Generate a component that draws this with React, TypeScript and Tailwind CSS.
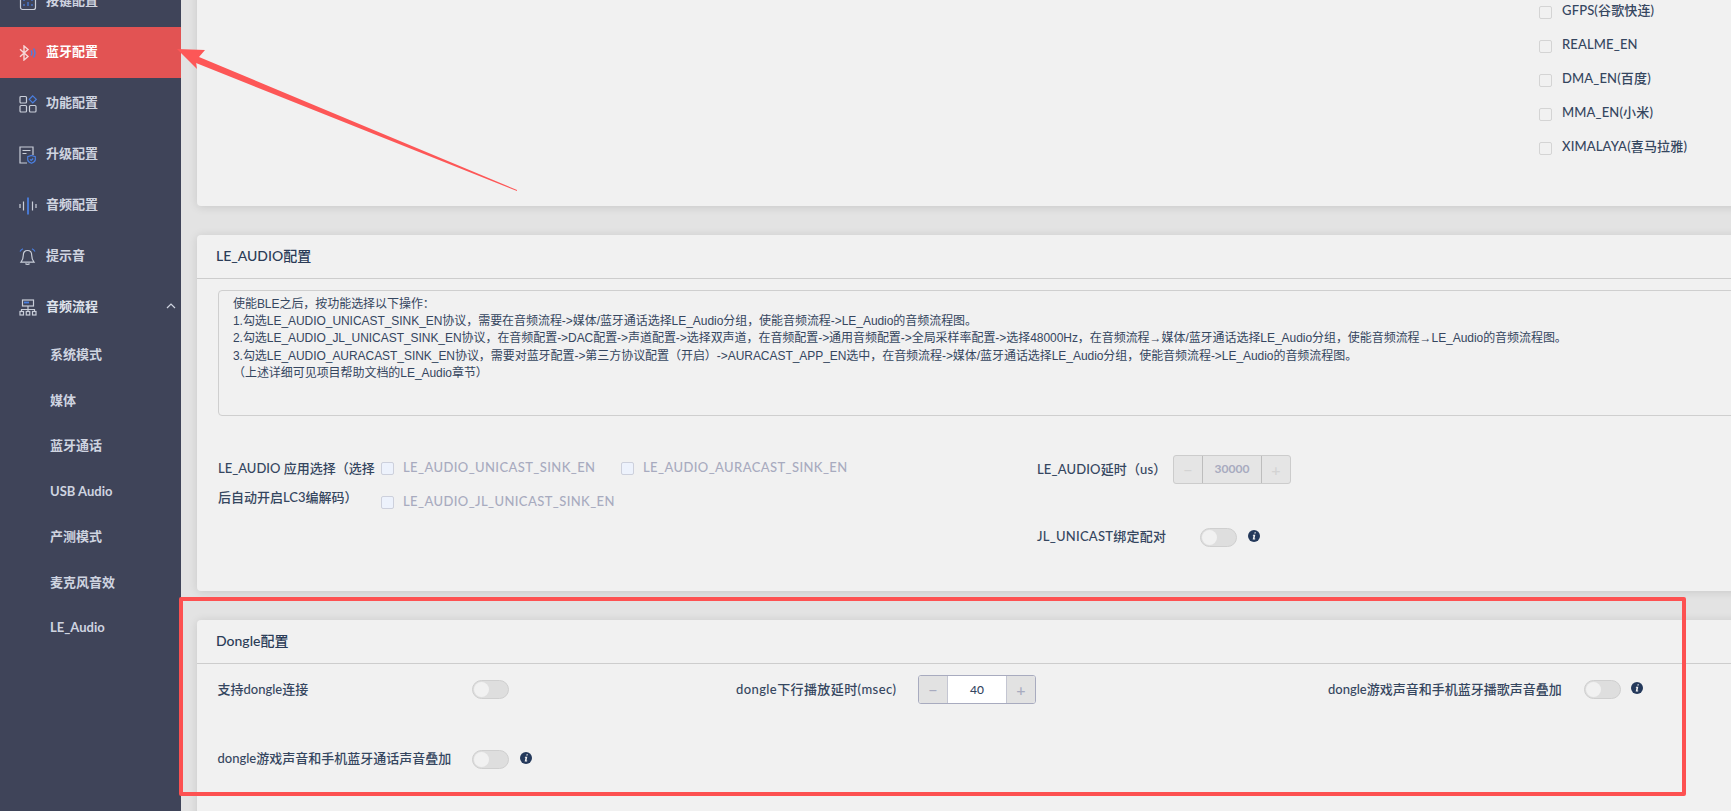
const sideItems = ['系统模式', '媒体', '蓝牙通话', 'USB Audio', '产测模式', '麦克风音效', 'LE_Audio'];
const protocols = ['GFPS(谷歌快连)', 'REALME_EN', 'DMA_EN(百度)', 'MMA_EN(小米)', 'XIMALAYA(喜马拉雅)'];
const helpLines = [
  '使能BLE之后，按功能选择以下操作：',
  '1.勾选LE_AUDIO_UNICAST_SINK_EN协议，需要在音频流程->媒体/蓝牙通话选择LE_Audio分组，使能音频流程->LE_Audio的音频流程图。',
  '2.勾选LE_AUDIO_JL_UNICAST_SINK_EN协议，在音频配置->DAC配置->声道配置->选择双声道，在音频配置->通用音频配置->全局采样率配置->选择48000Hz，在音频流程→媒体/蓝牙通话选择LE_Audio分组，使能音频流程→LE_Audio的音频流程图。',
  '3.勾选LE_AUDIO_AURACAST_SINK_EN协议，需要对蓝牙配置->第三方协议配置（开启）->AURACAST_APP_EN选中，在音频流程->媒体/蓝牙通话选择LE_Audio分组，使能音频流程->LE_Audio的音频流程图。',
  '（上述详细可见项目帮助文档的LE_Audio章节）',
];

const line = '#c9ced9';
const blue = '#4a7fe0';

function KeyIcon() {
  return (
    <svg width="18" height="18" viewBox="0 0 18 18" fill="none" stroke={line} strokeWidth="1.2">
      <rect x="1.5" y="1.5" width="15" height="15" rx="2" />
      <path d="M5 5v3M5 11v2M9 5v1M9 9v4M13 5v3M13 11v2" stroke={blue} />
    </svg>
  );
}

function BluetoothIcon() {
  return (
    <svg width="18" height="16" viewBox="0 0 18 16" fill="none" strokeWidth="1.4">
      <path d="M1 4.2l8 7.4L5 15V1l4 3.4-8 7.4" stroke="#f6d8d8" />
      <path d="M12 5.5c1 1.5 1 3.5 0 5M14.5 3.5c1.800 2.700 1.800 6.300 0 9" stroke={blue} />
    </svg>
  );
}

function AppsIcon() {
  return (
    <svg width="18" height="18" viewBox="0 0 18 18" fill="none" stroke={line} strokeWidth="1.2">
      <rect x="1" y="1.5" width="6.5" height="6.5" rx="1" />
      <rect x="1" y="10.5" width="6.5" height="6.5" rx="1" />
      <rect x="10.5" y="10.5" width="6.5" height="6.5" rx="1" />
      <path d="M13.75 0.8l3.5 3.5-3.5 3.5-3.5-3.5z" stroke={blue} />
    </svg>
  );
}

function UpgradeIcon() {
  return (
    <svg width="17" height="18" viewBox="0 0 17 18" fill="none" strokeWidth="1.2">
      <path d="M8 17H1V1h13v8" stroke={line} />
      <path d="M3.5 4.5h8M3.5 7.5h4" stroke={line} />
      <path d="M12.5 9.5l3.800 1.300v3c0 1.600-1.600 2.700-3.800 3.500-2.200-.8-3.800-1.900-3.800-3.500v-3z" stroke={blue} />
      <path d="M11 13.3l1.200 1.200 2-2" stroke={blue} />
    </svg>
  );
}

function WaveIcon() {
  return (
    <svg width="18" height="18" viewBox="0 0 18 18" fill="none" stroke={line} strokeWidth="1.2">
      <path d="M1 7v4M4.5 4.5v9M13.5 4.5v9M17 7v4" />
      <path d="M9 .5v17" stroke={blue} strokeWidth="1.8" />
    </svg>
  );
}

function BellIcon() {
  return (
    <svg width="17" height="18" viewBox="0 0 17 18" fill="none" strokeWidth="1.2">
      <path d="M8.5 2.5c-2.800 0-4.200 2-4.200 4.800 0 3-.9 5-2.300 6.800h13c-1.400-1.800-2.300-3.800-2.300-6.800 0-2.800-1.400-4.800-4.200-4.800z" stroke={line} />
      <path d="M6.5 15.5c.4 1.200 3.600 1.200 4 0" stroke={line} />
      <path d="M1 3.5C1.800 2.200 2.700 1.400 4 .8M16 3.500C15.200 2.200 14.300 1.400 13 .8" stroke={blue} />
    </svg>
  );
}

function FlowIcon() {
  return (
    <svg width="18" height="17" viewBox="0 0 18 17" fill="none" strokeWidth="1.2" stroke={line}>
      <rect x="3.5" y="1" width="11" height="6" />
      <path d="M5 3.5h5" stroke={blue} strokeWidth="1.8" />
      <path d="M9 7v4M2.5 12v-1.5h13V12M9 10.5V12" />
      <rect x="1" y="12.5" width="3.5" height="3.5" />
      <rect x="7.25" y="12.5" width="3.5" height="3.5" />
      <rect x="13.5" y="12.5" width="3.5" height="3.5" />
    </svg>
  );
}

function InfoIcon() {
  return (
    <svg width="12" height="12" viewBox="0 0 12 12">
      <circle cx="6" cy="6" r="6" fill="#24395b" />
      <path d="M6.6 2.2h1.300l-.3 1.300H6.300zM5 4.800h2.300L6.500 8.600h.8l-.2.900H4.700l.8-3.800h-.7z" fill="#f1f1f1" />
    </svg>
  );
}

function NavItem({ icon, label, active }: { icon: React.ReactNode; label: string; active?: boolean }) {
  return (
    <div className={`flex h-[51px] items-center pl-[19px] ${active ? 'bg-[#e25353] text-white' : 'text-[#cfd4e0]'}`}>
      <span className="flex w-[27px] shrink-0">{icon}</span>
      <span className="-mt-[2px]">{label}</span>
    </div>
  );
}

function Toggle() {
  return (
    <div className="flex h-[19px] w-[37px] shrink-0 items-center rounded-full border border-[#cfcfcf] bg-[#dedede] pl-px">
      <div className="h-[15px] w-[15px] rounded-full bg-[#f1f1f1]" />
    </div>
  );
}

function NumberInput({ value, disabled }: { value: string; disabled?: boolean }) {
  if (disabled) {
    return (
      <div className="flex h-[29px] w-[118px] items-stretch rounded-[3px] border border-[#cccccc] bg-[#e5e5e5] text-[12px] text-[#a8abbf]">
        <div className="flex w-[29px] items-center justify-center border-r border-[#bdbdbd] text-[16px] text-[#d3d3d3]">−</div>
        <div className="flex flex-1 items-center justify-center pb-[2px] font-bold">{value}</div>
        <div className="flex w-[29px] items-center justify-center border-l border-[#bdbdbd] text-[16px] text-[#d3d3d3]">+</div>
      </div>
    );
  }
  return (
    <div className="flex h-[29px] w-[118px] items-stretch overflow-hidden rounded-[3px] border border-[#a8abbf] bg-white text-[12px] text-[#35465f]">
      <div className="flex w-[29px] items-center justify-center border-r border-[#c4c6d2] bg-[#e2e2e2] text-[16px] text-[#a8abbf]">−</div>
      <div className="flex flex-1 items-center justify-center">{value}</div>
      <div className="flex w-[29px] items-center justify-center border-l border-[#c4c6d2] bg-[#e2e2e2] text-[16px] text-[#a8abbf]">+</div>
    </div>
  );
}

function DisabledCheck({ label, className }: { label: string; className?: string }) {
  return (
    <div className={`flex h-[34px] items-center gap-[9px] tracking-[0.4px] text-[#a8abbf] ${className ?? ''}`}>
      <div className="h-[13px] w-[13px] rounded-[2px] border border-[#cdd0dc] bg-[#edf2fc]" />
      <span>{label}</span>
    </div>
  );
}

function CardHeader({ title }: { title: string }) {
  return (
    <div className="flex h-[44px] items-center border-b border-[#cdcdcd] pb-[3px] pl-[19px] text-[14px] font-medium text-[#2b3c57]">
      {title}
    </div>
  );
}

export default function App() {
  return (
    <div className="relative flex h-[811px] w-[1731px] overflow-hidden bg-[#e3e3e3] font-['Lato','Noto_Sans_CJK_SC',sans-serif] text-[13px] font-medium text-[#35465f]">
      <aside className="-mt-[24px] w-[181px] shrink-0 bg-[#3f4459] font-bold">
        <NavItem icon={<KeyIcon />} label="按键配置" />
        <NavItem icon={<BluetoothIcon />} label="蓝牙配置" active />
        <NavItem icon={<AppsIcon />} label="功能配置" />
        <NavItem icon={<UpgradeIcon />} label="升级配置" />
        <NavItem icon={<WaveIcon />} label="音频配置" />
        <NavItem icon={<BellIcon />} label="提示音" />
        <div className="flex h-[51px] items-center pl-[19px] pr-[5px] text-[#dfe3ec]">
          <span className="flex w-[27px] shrink-0"><FlowIcon /></span>
          <span className="-mt-[2px] flex-1">音频流程</span>
          <svg className="-mt-[3px]" width="10" height="6" viewBox="0 0 10 6" fill="none" stroke="#cfd4e0" strokeWidth="1.2">
            <path d="M1 5l4-4 4 4" />
          </svg>
        </div>
        <div className="flex flex-col text-[#cfd4e0]">
          {sideItems.map((item) => (
            <div key={item} className="flex h-[45.5px] items-center pb-[2px] pl-[50px]">{item}</div>
          ))}
        </div>
      </aside>

      <main className="-mt-[100px] flex min-w-0 flex-1 flex-col gap-[29px] pl-[16px]">
        <section className="h-[306px] w-[1700px] shrink-0 rounded-[4px] bg-[#f1f1f1] shadow-[0_1px_10px_rgba(0,0,0,0.12)]">
          <div className="flex h-full flex-col justify-end pb-[41px] pl-[1342px]">
            {protocols.map((item) => (
              <div key={item} className="flex h-[34px] items-center gap-[10px]">
                <div className="h-[13px] w-[13px] rounded-[2px] border border-[#d4d4d4]" />
                <span className="-mt-[2px] tracking-[0.15px]">{item}</span>
              </div>
            ))}
          </div>
        </section>

        <section className="h-[356px] w-[1700px] shrink-0 rounded-[4px] bg-[#f1f1f1] shadow-[0_1px_10px_rgba(0,0,0,0.12)]">
          <CardHeader title="LE_AUDIO配置" />
          <div className="px-[21px] pt-[11px]">
            <div className="h-[126px] whitespace-pre rounded-[4px] border border-[#cfcfcf] pl-[14px] pt-[5px] font-['Liberation_Sans','Noto_Sans_CJK_SC',sans-serif] text-[12px] font-normal leading-[17.2px] tracking-[-0.05px]">
              {helpLines.map((text) => (
                <div key={text}>{text}</div>
              ))}
            </div>
            <div className="mt-[35px] flex">
              <div className="flex w-[819px] shrink-0">
                <div className="w-[158px] shrink-0 pt-[3px] leading-[29px]">LE_AUDIO 应用选择（选择后自动开启LC3编解码）</div>
                <div className="ml-[5px] w-[600px]">
                  <div className="flex">
                    <DisabledCheck label="LE_AUDIO_UNICAST_SINK_EN" className="w-[240px]" />
                    <DisabledCheck label="LE_AUDIO_AURACAST_SINK_EN" />
                  </div>
                  <DisabledCheck label="LE_AUDIO_JL_UNICAST_SINK_EN" />
                </div>
              </div>
              <div className="flex flex-col pt-[4px]">
                <div className="flex items-center">
                  <span className="w-[136px] tracking-[0.15px]">LE_AUDIO延时（us）</span>
                  <NumberInput value="30000" disabled />
                </div>
                <div className="mt-[44px] flex items-center">
                  <span className="-mt-[1px] w-[163px] tracking-[0.25px]">JL_UNICAST绑定配对</span>
                  <Toggle />
                  <span className="ml-[11px] -mt-[3px]"><InfoIcon /></span>
                </div>
              </div>
            </div>
          </div>
        </section>

        <section className="h-[300px] w-[1700px] shrink-0 rounded-[4px] bg-[#f1f1f1] shadow-[0_1px_10px_rgba(0,0,0,0.12)]">
          <CardHeader title="Dongle配置" />
          <div className="px-[20.5px] pt-[11px]">
            <div className="flex h-[29px] items-center">
              <span className="w-[254.5px] shrink-0">支持dongle连接</span>
              <Toggle />
              <span className="ml-[227px] w-[182px] shrink-0 tracking-[0.4px]">dongle下行播放延时(msec)</span>
              <NumberInput value="40" />
              <span className="ml-[292px] w-[256px] shrink-0">dongle游戏声音和手机蓝牙播歌声音叠加</span>
              <Toggle />
              <span className="ml-[10px] -mt-[3px]"><InfoIcon /></span>
            </div>
            <div className="mt-[41px] flex h-[29px] items-center">
              <span className="-mt-[2px] w-[254.5px] shrink-0">dongle游戏声音和手机蓝牙通话声音叠加</span>
              <Toggle />
              <span className="ml-[11px] -mt-[4px]"><InfoIcon /></span>
            </div>
          </div>
        </section>
      </main>

      {/* annotations drawn over the screenshot */}
      <div className="absolute left-[179px] top-[597px] h-[199px] w-[1507px] rounded-[2px] border-4 border-[#fd5151]" />
      <svg className="absolute left-0 top-0" width="1731" height="811" fill="none">
        <path d="M177 49L205 50L199 57L517 190L517 191L196 63L197 69Z" fill="#fd5757" />
      </svg>
    </div>
  );
}
